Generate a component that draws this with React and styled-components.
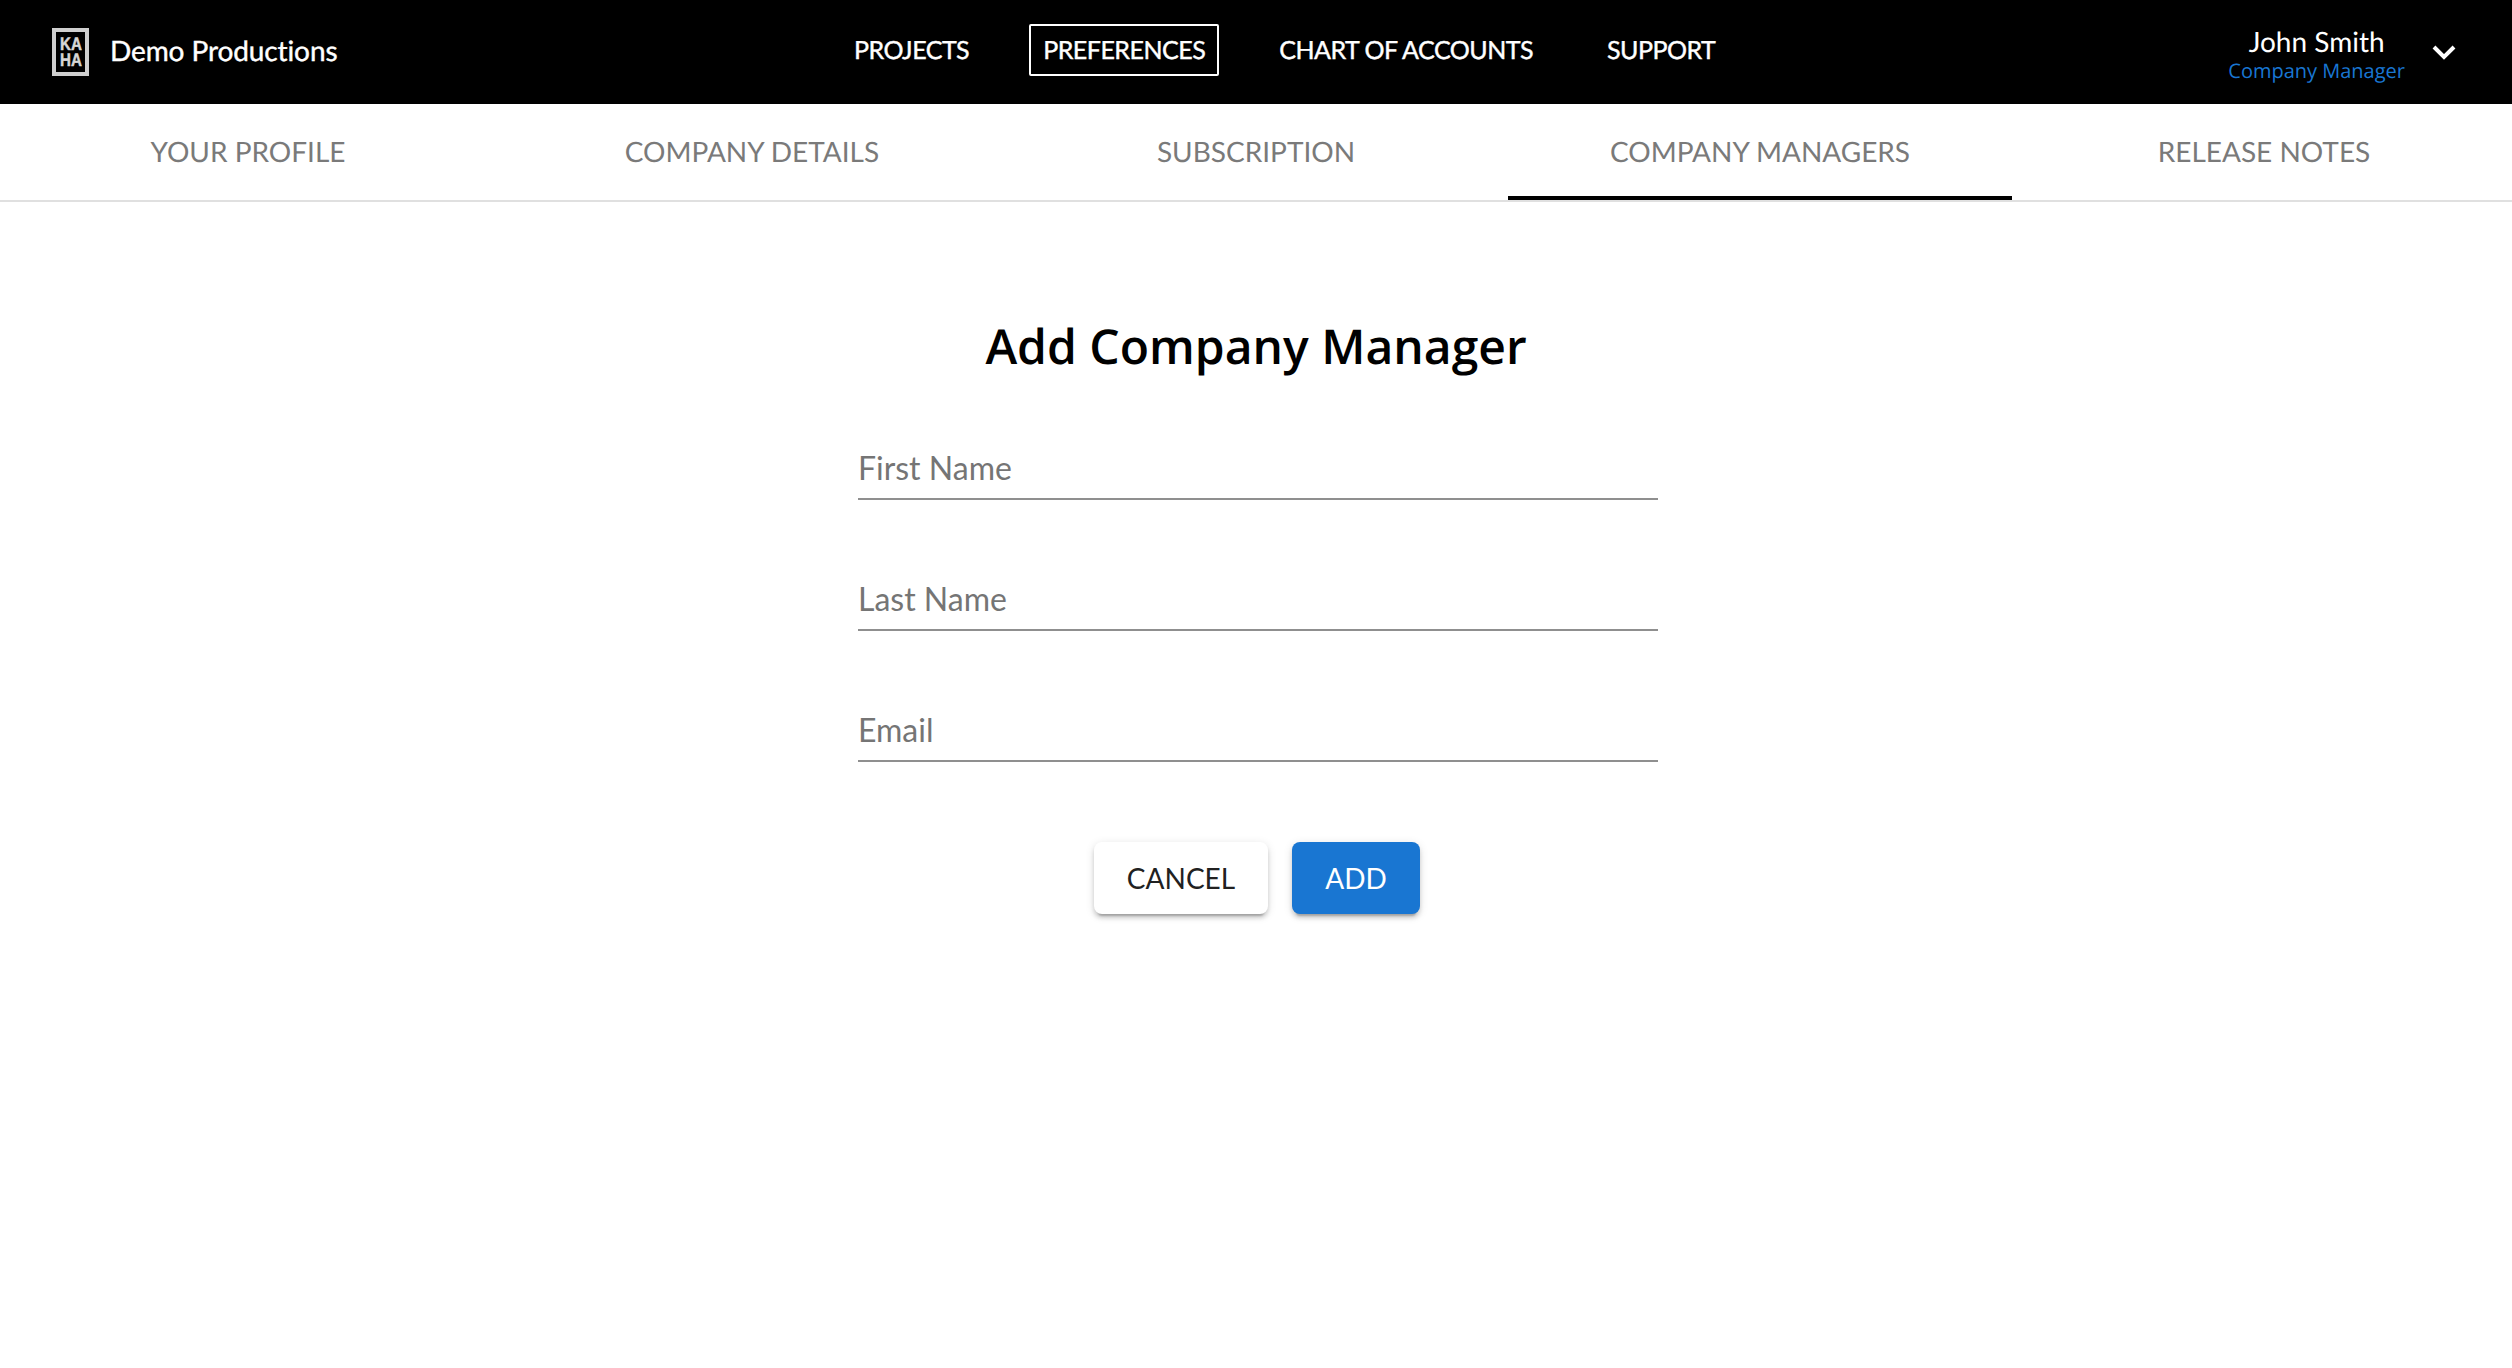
import React from 'react';
import styled, { createGlobalStyle } from 'styled-components';

const GlobalStyle = createGlobalStyle`
  html, body {
    margin: 0;
    padding: 0;
    background: #fff;
    font-family: "Lato", "Liberation Sans", sans-serif;
    text-rendering: geometricPrecision;
  }
  * { box-sizing: border-box; }
`;

const Page = styled.div`
  width: 100%;
  min-height: 1368px;
  overflow: hidden;
  background: #fff;
`;

const TopBar = styled.header`
  display: flex;
  align-items: center;
  height: 104px;
  padding: 0 56px 0 52px;
  background: #000;
  color: #fff;
`;

const Brand = styled.div`
  display: flex;
  align-items: center;
  gap: 21px;
  width: 788px;
  flex: none;
  margin-top: -4px;
`;

const LogoBox = styled.div`
  display: flex;
  flex-direction: column;
  align-items: center;
  justify-content: center;
  width: 37px;
  height: 48px;
  margin-top: 4px;
  border: 4px solid #cfcfcf;
  color: #d6d6d6;
  font-family: "Liberation Sans", sans-serif;
  font-size: 18px;
  font-weight: 700;
  line-height: 16px;
  -webkit-text-stroke: 0.5px #d6d6d6;

  span {
    display: block;
    transform: scaleX(0.84);
  }
`;

const BrandName = styled.span`
  font-size: 28px;
  letter-spacing: -0.1px;
  -webkit-text-stroke: 0.4px #fff;
`;

const MainNav = styled.nav`
  display: flex;
  align-items: center;
  gap: 46px;
  margin-top: -4px;
`;

const NavItem = styled.a`
  padding: 0 12px;
  height: 52px;
  line-height: 48px;
  border: 2px solid ${props => (props.$active ? '#fff' : 'transparent')};
  border-radius: 2px;
  font-size: 25px;
  letter-spacing: -0.5px;
  -webkit-text-stroke: 0.4px #fff;
  white-space: nowrap;
`;

const UserMenu = styled.div`
  display: flex;
  align-items: center;
  gap: 27px;
  margin-left: auto;
`;

const UserText = styled.div`
  display: flex;
  flex-direction: column;
  align-items: center;
  padding-top: 3px;
`;

const UserName = styled.span`
  font-size: 28px;
  line-height: 32px;
`;

const UserRole = styled.span`
  margin-top: 2px;
  font-family: "Open Sans", sans-serif;
  font-size: 20px;
  line-height: 24px;
  color: #1976d2;
`;

const Chevron = styled.svg`
  display: block;
  width: 24px;
  height: 16px;
`;

const TabBar = styled.div`
  display: grid;
  grid-template-columns: repeat(5, 504px);
  justify-content: center;
  height: 98px;
  border-bottom: 2px solid #e0e0e0;
`;

const Tab = styled.div`
  display: flex;
  align-items: center;
  justify-content: center;
  height: 96px;
  padding-top: 2px;
  border-bottom: 4px solid ${props => (props.$active ? '#000' : 'transparent')};
  font-size: 28px;
  color: #7a7a7a;
`;

const Content = styled.main`
  display: flex;
  flex-direction: column;
  align-items: center;
  padding-top: 113px;
`;

const Title = styled.h1`
  margin: 0 0 41px;
  font-family: "Open Sans", sans-serif;
  font-size: 48px;
  line-height: 64px;
  font-weight: 600;
  color: #000;
`;

const Form = styled.form`
  display: flex;
  flex-direction: column;
  gap: 51px;
  width: 800px;
  margin-left: 4px;
`;

const Field = styled.input`
  display: block;
  width: 100%;
  height: 80px;
  padding: 28px 0 12px;
  border: 0;
  border-bottom: 2px solid #8f8f8f;
  outline: 0;
  background: transparent;
  font-family: "Lato", sans-serif;
  font-size: 32px;

  &::placeholder {
    color: #757575;
    opacity: 1;
  }
`;

const Actions = styled.div`
  display: flex;
  justify-content: center;
  gap: 24px;
  margin-top: 29px;
  padding-right: 2px;
`;

const Button = styled.button`
  width: ${props => (props.$primary ? '128px' : '174px')};
  height: 72px;
  padding: 0;
  border: 0;
  border-radius: 8px;
  background: ${props => (props.$primary ? '#1976d2' : '#fff')};
  color: ${props => (props.$primary ? '#fff' : '#212121')};
  box-shadow: 0 6px 2px -4px rgba(0, 0, 0, 0.2), 0 4px 4px 0 rgba(0, 0, 0, 0.14), 0 2px 10px 0 rgba(0, 0, 0, 0.12);
  font-family: "Lato", sans-serif;
  font-size: 28px;
`;

const tabs = ['YOUR PROFILE', 'COMPANY DETAILS', 'SUBSCRIPTION', 'COMPANY MANAGERS', 'RELEASE NOTES'];
const navItems = ['PROJECTS', 'PREFERENCES', 'CHART OF ACCOUNTS', 'SUPPORT'];
const fields = ['First Name', 'Last Name', 'Email'];

const App = () => {
  return (
    <Page>
      <GlobalStyle />
      <TopBar>
        <Brand>
          <LogoBox>
            <span>KA</span>
            <span>HA</span>
          </LogoBox>
          <BrandName>Demo Productions</BrandName>
        </Brand>
        <MainNav>
          {navItems.map(item => (
            <NavItem key={item} $active={item === 'PREFERENCES'}>{item}</NavItem>
          ))}
        </MainNav>
        <UserMenu>
          <UserText>
            <UserName>John Smith</UserName>
            <UserRole>Company Manager</UserRole>
          </UserText>
          <Chevron viewBox="0 0 24 16">
            <path d="M2 3l10 10L22 3" fill="none" stroke="#fff" strokeWidth="4" />
          </Chevron>
        </UserMenu>
      </TopBar>
      <TabBar>
        {tabs.map(tab => (
          <Tab key={tab} $active={tab === 'COMPANY MANAGERS'}>{tab}</Tab>
        ))}
      </TabBar>
      <Content>
        <Title>Add Company Manager</Title>
        <Form>
          {fields.map(field => (
            <Field key={field} placeholder={field} />
          ))}
          <Actions>
            <Button type="button">CANCEL</Button>
            <Button type="button" $primary>ADD</Button>
          </Actions>
        </Form>
      </Content>
    </Page>
  );
};

export default App;
